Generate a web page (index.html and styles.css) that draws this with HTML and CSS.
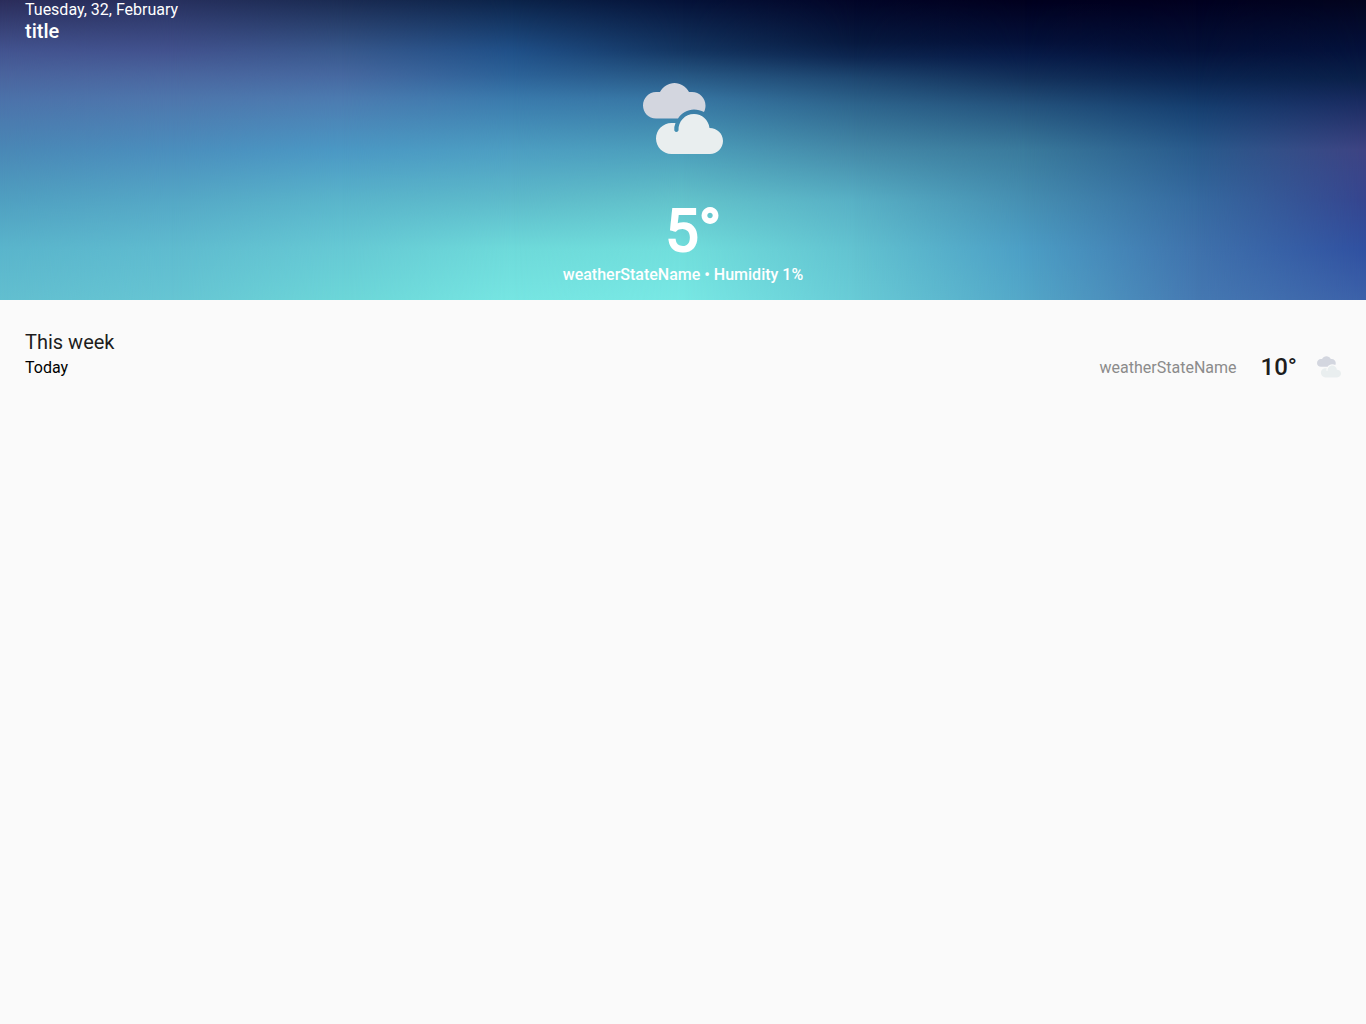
FILE: index.html
```html
<!DOCTYPE html>
<html lang="en">
<head>
<meta charset="utf-8">
<meta name="viewport" content="width=device-width, initial-scale=1">
<title>Weather</title>
<link rel="stylesheet" href="styles.css">
</head>
<body>
<svg class="symbols" aria-hidden="true">
  <symbol id="clouds" viewBox="0 0 80 72">
    <path class="cloud-back" d="M13 35.500C5.500 35.500 0 29.500 0 22.500C0 15 6 9 13 9H17C20 3.500 25.500 0 31.500 0C37.500 0 43 3.500 46 9H49C56.500 9 62.500 15 62.500 22.500C62.500 24.800 62 27 61 29C58 27.400 54.500 26.500 51 26.500C44.500 26.500 38.500 30 35 35.500Z"/>
    <path class="cloud-front" d="M28.500 71C20 71 13 64 13 55.500C13 47 20 40 28.500 40H32.500Q31 43.500 31.300 47.500Q33.300 50.500 35.500 47.500C35 38.500 42 31 51 31C59 31 65.500 37 66.500 45C74 45 80 50.500 80 58C80 65 74 71 67 71Z"/>
  </symbol>
</svg>
<header class="hero">
  <div class="sky" aria-hidden="true">
    <div class="sky-band band-0"></div>
    <div class="sky-band band-1"></div>
    <div class="sky-band band-2"></div>
    <div class="sky-band band-3"></div>
    <div class="sky-band band-4"></div>
    <div class="sky-band band-5"></div>
    <div class="sky-band band-6"></div>
    <div class="sky-band band-7"></div>
    <div class="sky-band band-8"></div>
  </div>
  <div class="place">
    <p class="date">Tuesday, 32, February</p>
    <h1 class="title">title</h1>
  </div>
  <div class="current">
    <svg class="current-icon" aria-hidden="true"><use href="#clouds"/></svg>
    <p class="current-temp">5°</p>
    <p class="summary">weatherStateName • Humidity 1%</p>
  </div>
</header>
<main class="week">
  <h2 class="week-title">This week</h2>
  <ul class="days">
    <li class="day">
      <span class="day-name">Today</span>
      <span class="day-state">weatherStateName</span>
      <span class="day-temp">10°</span>
      <svg class="day-icon" aria-hidden="true"><use href="#clouds"/></svg>
    </li>
  </ul>
</main>
</body>
</html>
```
FILE: styles.css
```css
* { box-sizing: border-box; margin: 0; padding: 0; }

body {
  background: #fafafa;
  color: #1d1d1d;
  font-family: Roboto, "Liberation Sans", sans-serif;
  font-size: 16px;
  line-height: 20px;
}

.symbols { display: none; }
.cloud-back { fill: #d3d6df; }
.cloud-front { fill: #e9eeef; }

.hero {
  position: relative;
  isolation: isolate;
  min-height: 300px;
  padding: 0 25px 15px;
  display: flex;
  flex-direction: column;
  justify-content: space-between;
  color: #fff;
}

/* Vertical colour ramps, each faded in from the ramp on its left. */
.sky { position: absolute; inset: 0; z-index: -1; overflow: hidden; }
.sky-band {
  position: absolute;
  inset: 0;
  background: linear-gradient(var(--ramp));
  mask-image: linear-gradient(to right, transparent var(--from), #000 var(--to));
}
.band-0 { --ramp: #2b2d5b, #435490 17%, #4a649e 25%, #4c72aa 33%, #4a88b6 50%, #50a0c1 67%, #5ab5cc 83%, #62bfd0; mask-image: none; }
.band-1 { --from: 0%; --to: 12.5%; --ramp: #27305e, #42528e 17%, #4a669f 25%, #4e76ac 33%, #4b8ebd 50%, #55a8c6 67%, #5fbbcf 83%, #66c5d3; }
.band-2 { --from: 12.5%; --to: 25%; --ramp: #1a2b52, #38588c 17%, #4668a0 25%, #4c7bb0 33%, #4b98c4 50%, #5ab5cb 67%, #66c9d4 83%, #6cd6d8; }
.band-3 { --from: 25%; --to: 37.5%; --ramp: #0b2349, #205088 17%, #2c6298 25%, #3a7aac 33%, #4d9ec2 50%, #5ebbcb 67%, #6edada 83%, #76e5e2; }
.band-4 { --from: 37.5%; --to: 50%; --ramp: #051238, #143662 17%, #275783 25%, #3776a3 33%, #4c9fbb 50%, #63c3cb 67%, #71dedc 83%, #78e8e4; }
.band-5 { --from: 50%; --to: 62.5%; --ramp: #020527, #07193f 14%, #0d2650 19%, #1e4771 26%, #2e658d 35%, #4489a8 50%, #58b0c5 67%, #62c2d0 83%, #68cbd6; }
.band-6 { --from: 62.5%; --to: 75%; --ramp: #01001e, #04113a 14%, #081c49 19%, #13315b 26%, #24527c 35%, #3a7a9c 50%, #468fb2 67%, #4c9ec5 83%, #53a7c8; }
.band-7 { --from: 75%; --to: 87.5%; --ramp: #01001f, #041139 17%, #0a2450 26%, #163f70 36%, #295a8c 50%, #366aa0 67%, #3f72ac 83%, #4579b2; }
.band-8 { --from: 87.5%; --to: 100%; --ramp: #02041e, #04123c 17%, #0a2049 26%, #1a2b61 34%, #3e4383 50%, #35458f 67%, #3050a0 83%, #3c61a9; }

.title { font-size: 20px; font-weight: 500; line-height: 22px; }

.current { display: flex; flex-direction: column; align-items: center; }
.current-icon { width: 80px; height: 72px; }
.current-temp {
  margin-top: 42px;
  padding-left: 20px;
  font-size: 60px;
  line-height: 68px;
  -webkit-text-stroke: 2px currentColor;
}
.summary { font-weight: 500; }

.week { padding: 30px 25px; }
.week-title { font-size: 20px; font-weight: 400; line-height: 24px; }
.days { list-style: none; }
.day { display: flex; align-items: center; min-height: 26px; }
.day-name, .day-state { padding-top: 2px; }
.day-name { flex: 1; color: #000; }
.day-state { color: #8b8b8b; }
.day-temp { margin: 0 20px 0 24px; font-size: 24px; font-weight: 500; }
.day-icon { width: 24px; height: 22px; }
```
